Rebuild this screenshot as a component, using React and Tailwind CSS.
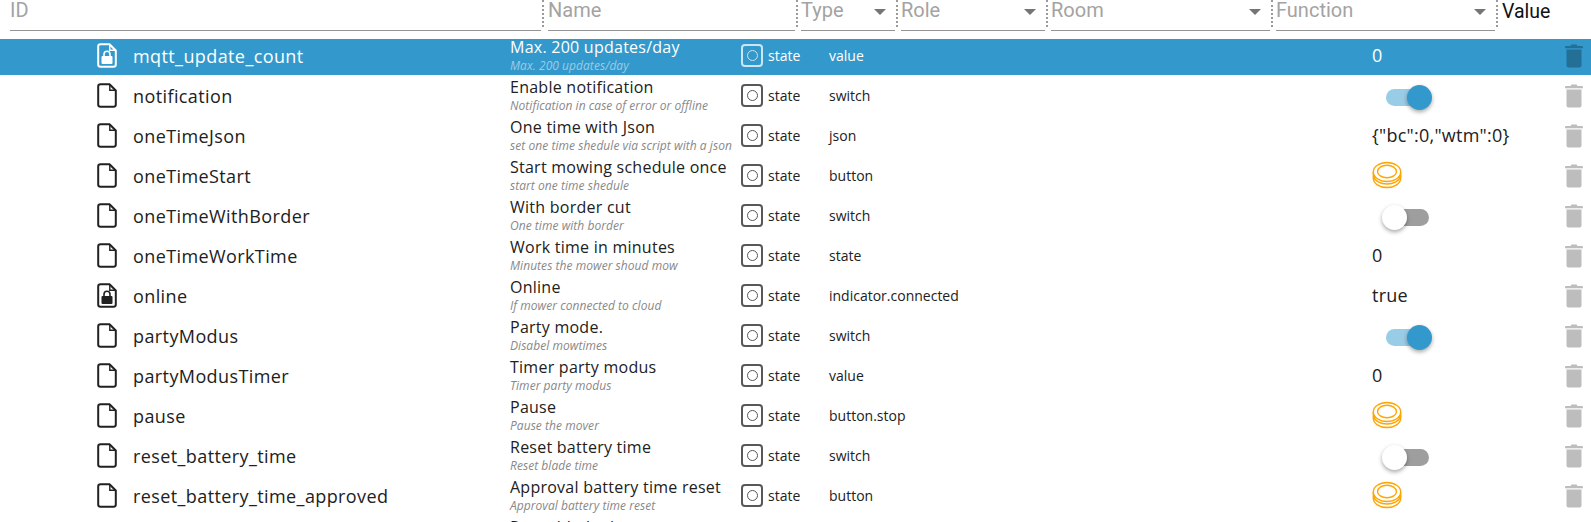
import React from "react";

const rows = [
  { id: "mqtt_update_count", locked: true, name: "Max. 200 updates/day", desc: "Max. 200 updates/day", role: "value", value: "0", selected: true },
  { id: "notification", name: "Enable notification", desc: "Notification in case of error or offline", role: "switch", toggle: true },
  { id: "oneTimeJson", name: "One time with Json", desc: "set one time shedule via script with a json", role: "json", value: '{"bc":0,"wtm":0}' },
  { id: "oneTimeStart", name: "Start mowing schedule once", desc: "start one time shedule", role: "button", button: true },
  { id: "oneTimeWithBorder", name: "With border cut", desc: "One time with border", role: "switch", toggle: false },
  { id: "oneTimeWorkTime", name: "Work time in minutes", desc: "Minutes the mower shoud mow", role: "state", value: "0" },
  { id: "online", locked: true, name: "Online", desc: "If mower connected to cloud", role: "indicator.connected", value: "true" },
  { id: "partyModus", name: "Party mode.", desc: "Disabel mowtimes", role: "switch", toggle: true },
  { id: "partyModusTimer", name: "Timer party modus", desc: "Timer party modus", role: "value", value: "0" },
  { id: "pause", name: "Pause", desc: "Pause the mover", role: "button.stop", button: true },
  { id: "reset_battery_time", name: "Reset battery time", desc: "Reset blade time", role: "switch", toggle: false },
  { id: "reset_battery_time_approved", name: "Approval battery time reset", desc: "Approval battery time reset", role: "button", button: true },
  { id: "reset_blade_time", name: "Reset blade time", desc: "Reset blade time", role: "switch", toggle: false },
];

function FileIcon({ locked }) {
  return (
    <svg width="20" height="25" viewBox="0 0 20 25" fill="none" stroke="currentColor">
      <path d="M3.5 1.2H12.5L18.8 7.5V21.5a2.3 2.3 0 0 1-2.3 2.3H3.5a2.3 2.3 0 0 1-2.3-2.3V3.5a2.3 2.3 0 0 1 2.3-2.3Z" strokeWidth="2" strokeLinejoin="round" />
      <path d="M12.8 1.5V7.2H18.5" strokeWidth="1.4" />
      {locked && (
        <g>
          <rect x="4.5" y="13" width="11" height="8" rx="1" fill="currentColor" stroke="none" />
          <path d="M7 13v-1.8a3 3 0 0 1 6 0V13" strokeWidth="1.6" />
        </g>
      )}
    </svg>
  );
}

function TrashIcon() {
  return (
    <svg width="18" height="24" viewBox="0 0 18 24" fill="currentColor">
      <path d="M6.5 0.5h5l1 1.5H17a1 1 0 0 1 1 1V4.2H0V3a1 1 0 0 1 1-1h4.5Z" />
      <path d="M1.5 5.5h15V21.5a2 2 0 0 1-2 2h-11a2 2 0 0 1-2-2Z" />
    </svg>
  );
}

function StateIcon() {
  return (
    <span className="flex h-[23px] w-[22px] items-center justify-center rounded-[4px] border-2 border-current opacity-75">
      <span className="h-[11px] w-[11px] rounded-full border-[1.5px] border-current" />
    </span>
  );
}

function PushButton() {
  return (
    <svg width="30" height="28" viewBox="0 0 30 28" fill="none" stroke="#ffa500" strokeWidth="1.4" className="mb-[1px]">
      <ellipse cx="15" cy="11" rx="13.7" ry="9.5" />
      <ellipse cx="15" cy="10.5" rx="9.5" ry="6.3" />
      <path d="M1.3 11v6c0 5.5 6.2 9.5 13.7 9.5s13.7-4 13.7-9.5v-6" />
      <path d="M1.5 15c1 5 7 8 13.5 8s12.5-3 13.5-8" />
    </svg>
  );
}

function Toggle({ on }) {
  return (
    <span className="relative ml-[14px] mt-[4px] block h-[17px] w-[43px]">
      <span className={`block h-full w-full rounded-full ${on ? "bg-[#99cce6]" : "bg-[#9e9e9e]"}`} />
      <span
        className={`absolute top-[-4px] h-[25px] w-[25px] rounded-full shadow-[0_2px_4px_rgba(0,0,0,0.35)] ${
          on ? "right-[-3px] bg-[#3399cc]" : "left-[-4px] bg-white"
        }`}
      />
    </span>
  );
}

function Filter({ label, className, select }) {
  return (
    <div className={`relative h-[31px] shrink-0 border-b border-[#949494] ${className}`}>
      <span className="block font-['Roboto',sans-serif] text-[20px] leading-[20px] text-[#a3a3a3]">{label}</span>
      {select && (
        <span className="absolute right-[9px] top-[9px] h-0 w-0 border-x-[6px] border-t-[6px] border-x-transparent border-t-[#757575]" />
      )}
    </div>
  );
}

function Divider({ className = "" }) {
  return <div className={`ml-[1px] mr-[3px] h-[27px] w-0 shrink-0 self-start border-l-2 border-dotted border-[#9a9a9a] ${className}`} />;
}

function Row({ row }) {
  const sel = row.selected;
  return (
    <div className="h-[40px] shrink-0">
      <div className={`flex h-[36px] items-center pb-[3px] ${sel ? "bg-[#3399cc] text-white" : "text-[#212121]"}`}>
        <div className="flex w-[510px] shrink-0 items-center pl-[97px]">
          <span className="w-[36px] shrink-0">
            <FileIcon locked={row.locked} />
          </span>
          <span className="pt-[1px] text-[18px] tracking-[0.4px]">{row.id}</span>
        </div>
        <div className="mb-[2px] w-[231px] shrink-0 whitespace-nowrap">
          <div className="text-[16px] leading-[22px] tracking-[0.25px]">{row.name}</div>
          <div className={`text-[12px] leading-[16px] tracking-[0.05px] italic ${sel ? "text-[#99cce6]" : "text-[#888888]"}`}>{row.desc}</div>
        </div>
        <div className="flex w-[88px] shrink-0 items-center gap-[5px] text-[14px]">
          <StateIcon />
          <span>state</span>
        </div>
        <div className="w-[543px] shrink-0 text-[14px]">{row.role}</div>
        <div className="flex w-[193px] shrink-0 items-center text-[18px] tracking-[0.25px]">
          {row.value}
          {row.toggle !== undefined && <Toggle on={row.toggle} />}
          {row.button && <PushButton />}
        </div>
        <div className={sel ? "text-[#246f96]" : "text-[#bdbdbd]"}>
          <TrashIcon />
        </div>
      </div>
    </div>
  );
}

export default function App() {
  return (
    <div className="flex h-[522px] flex-col overflow-hidden bg-white font-['Open_Sans',sans-serif]">
      <div className="flex h-[39px] shrink-0 items-start pl-[10px]">
        <Filter label="ID" className="w-[531px]" />
        <Divider className="mr-[4px]" />
        <Filter label="Name" className="w-[247px]" />
        <Divider />
        <Filter label="Type" select className="w-[94px]" />
        <Divider />
        <Filter label="Role" select className="w-[144px]" />
        <Divider />
        <Filter label="Room" select className="w-[219px]" />
        <Divider />
        <Filter label="Function" select className="w-[219px]" />
        <Divider />
        <span className="ml-[1px] font-['Roboto',sans-serif] text-[19.5px] leading-[23px] text-[#111111]">Value</span>
      </div>
      {rows.map((r) => (
        <Row key={r.id} row={r} />
      ))}
    </div>
  );
}
